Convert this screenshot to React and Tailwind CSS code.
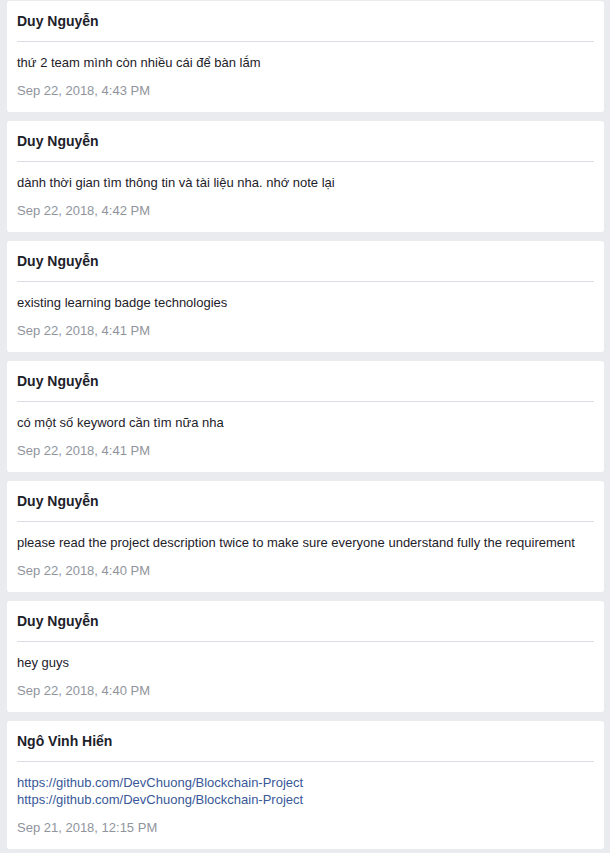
const messages = [
  { id: 1, author: "Duy Nguyễn", lines: ["thứ 2 team mình còn nhiều cái để bàn lắm"], time: "Sep 22, 2018, 4:43 PM" },
  { id: 2, author: "Duy Nguyễn", lines: ["dành thời gian tìm thông tin và tài liệu nha. nhớ note lại"], time: "Sep 22, 2018, 4:42 PM" },
  { id: 3, author: "Duy Nguyễn", lines: ["existing learning badge technologies"], time: "Sep 22, 2018, 4:41 PM" },
  { id: 4, author: "Duy Nguyễn", lines: ["có một số keyword cần tìm nữa nha"], time: "Sep 22, 2018, 4:41 PM" },
  {
    id: 5,
    author: "Duy Nguyễn",
    lines: ["please read the project description twice to make sure everyone understand fully the requirement"],
    time: "Sep 22, 2018, 4:40 PM",
  },
  { id: 6, author: "Duy Nguyễn", lines: ["hey guys"], time: "Sep 22, 2018, 4:40 PM" },
  {
    id: 7,
    author: "Ngô Vinh Hiển",
    links: [
      "https://github.com/DevChuong/Blockchain-Project",
      "https://github.com/DevChuong/Blockchain-Project",
    ],
    time: "Sep 21, 2018, 12:15 PM",
  },
];

function MessageCard({ data }) {
  return (
    <div className="bg-white rounded-[3px] px-[10px]">
      {/* HEADER */}
      <div className="py-[10px] border-b border-[#dadde1]">
        <p className="text-[14px] leading-[20px] font-bold text-[#1d2129]">{data.author}</p>
      </div>

      {/* BODY */}
      <div className="pt-[12px] pb-[13px]">
        {data.lines &&
          data.lines.map((line, i) => (
            <p key={i} className="text-[13px] leading-[17px] text-[#1d2129]">
              {line}
            </p>
          ))}
        {data.links &&
          data.links.map((link, i) => (
            <a key={i} href="#" className="block text-[13px] leading-[17px] text-[#385898]">
              {link}
            </a>
          ))}
        <p className="mt-[11px] text-[13px] leading-[17px] text-[#90949c]">{data.time}</p>
      </div>
    </div>
  );
}

export default function App() {
  return (
    <div
      className="min-h-screen bg-[#e9ebee] pt-px pl-[7px] pr-[6px] pb-[4px]"
      style={{ fontFamily: "'Liberation Sans', Arial, sans-serif" }}
    >
      <div className="flex flex-col gap-[9px]">
        {messages.map((m) => (
          <MessageCard key={m.id} data={m} />
        ))}
      </div>
    </div>
  );
}
